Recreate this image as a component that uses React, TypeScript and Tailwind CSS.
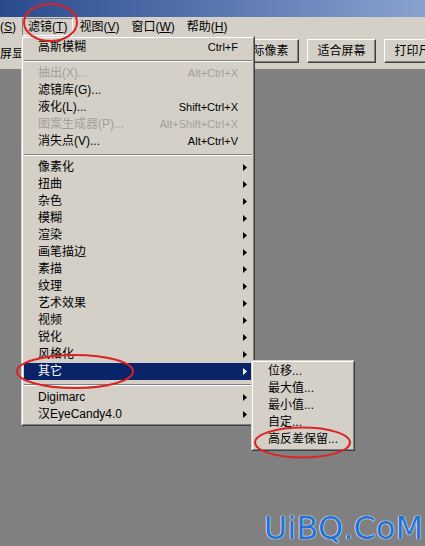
import React from 'react';

type Entry =
  | { sep: true }
  | { label: string; keys?: string; disabled?: boolean; sub?: boolean; active?: boolean };

const mainMenu: Entry[] = [
  { label: '高斯模糊', keys: 'Ctrl+F' },
  { sep: true },
  { label: '抽出(X)...', keys: 'Alt+Ctrl+X', disabled: true },
  { label: '滤镜库(G)...' },
  { label: '液化(L)...', keys: 'Shift+Ctrl+X' },
  { label: '图案生成器(P)...', keys: 'Alt+Shift+Ctrl+X', disabled: true },
  { label: '消失点(V)...', keys: 'Alt+Ctrl+V' },
  { sep: true },
  { label: '像素化', sub: true },
  { label: '扭曲', sub: true },
  { label: '杂色', sub: true },
  { label: '模糊', sub: true },
  { label: '渲染', sub: true },
  { label: '画笔描边', sub: true },
  { label: '素描', sub: true },
  { label: '纹理', sub: true },
  { label: '艺术效果', sub: true },
  { label: '视频', sub: true },
  { label: '锐化', sub: true },
  { label: '风格化', sub: true },
  { label: '其它', sub: true, active: true },
  { sep: true },
  { label: 'Digimarc', sub: true },
  { label: '汉EyeCandy4.0', sub: true },
];

const subMenu = ['位移...', '最大值...', '最小值...', '自定...', '高反差保留...'];

const Arrow = ({ white }: { white?: boolean }) => (
  <svg width="4" height="7" viewBox="0 0 4 7">
    <path d="M0 0 L4 3.5 L0 7 Z" fill={white ? '#fff' : '#000'} />
  </svg>
);

const Row = ({ label, keys, disabled, sub, active }: { label: string; keys?: string; disabled?: boolean; sub?: boolean; active?: boolean }) => (
  <div
    className={`grid grid-cols-[1fr_auto_14px] items-center h-[17px] pl-[14px] ${
      active ? 'bg-[#0a246a] text-white' : disabled ? 'text-[#a39f97]' : 'text-black'
    }`}
  >
    <span className="whitespace-nowrap leading-none pb-px">{label}</span>
    <span className="text-[11px] whitespace-nowrap leading-none">{keys}</span>
    <span className="flex justify-center">{sub && <Arrow white={active} />}</span>
  </div>
);

const Separator = () => (
  <div className="h-[9px] flex items-center">
    <div className="w-full h-[2px] border-t border-t-[#808080] border-b border-b-white" />
  </div>
);

const Frame = ({ className, children }: { className: string; children: React.ReactNode }) => (
  <div
    className={`absolute bg-[#d4d0c8] border border-t-[#d4d0c8] border-l-[#d4d0c8] border-r-[#404040] border-b-[#404040] ${className}`}
  >
    <div className="border border-t-white border-l-white border-r-[#808080] border-b-[#808080] p-px">{children}</div>
  </div>
);

const MenuTitle = ({ name, letter, pressed, className = '' }: { name: string; letter: string; pressed?: boolean; className?: string }) => (
  <div
    className={`h-[18px] px-[5px] flex items-center whitespace-nowrap border ${
      pressed ? 'border-t-[#808080] border-l-[#808080] border-r-white border-b-white' : 'border-transparent'
    } ${className}`}
  >
    {name}(<u className="underline-offset-1">{letter}</u>)
  </div>
);

const ToolButton = ({ children, className = '' }: { children: React.ReactNode; className?: string }) => (
  <div
    className={`h-[24px] w-[69px] shrink-0 flex items-center justify-center whitespace-nowrap border border-t-white border-l-white border-r-[#404040] border-b-[#404040] shadow-[inset_-1px_-1px_0_#808080] ${className}`}
  >
    {children}
  </div>
);

export default function App() {
  return (
    <div className="relative w-[425px] h-[546px] overflow-hidden flex flex-col bg-[#808080] text-[12px] text-black font-['Liberation_Sans','Noto_Sans_CJK_SC',sans-serif]">
      {/* title bar */}
      <div className="h-[17px] shrink-0 bg-gradient-to-r from-[#2a4a8e] to-[#8aa2cf]" />

      {/* menu bar */}
      <div className="h-[19px] shrink-0 bg-[#d4d0c8] flex items-center overflow-hidden">
        <MenuTitle name="选择" letter="S" className="ml-[-30px]" />
        <MenuTitle name="滤镜" letter="T" pressed />
        <MenuTitle name="视图" letter="V" />
        <MenuTitle name="窗口" letter="W" />
        <MenuTitle name="帮助" letter="H" />
      </div>

      {/* options bar */}
      <div className="h-[33px] shrink-0 bg-[#d4d0c8] flex items-start pt-[3px] overflow-hidden">
        <span className="self-center ml-[-24px] whitespace-nowrap">以满屏显示</span>
        <ToolButton className="ml-[194px]">实际像素</ToolButton>
        <ToolButton className="ml-[8px]">适合屏幕</ToolButton>
        <ToolButton className="ml-[8px]">打印尺寸</ToolButton>
      </div>

      {/* workspace */}
      <div className="flex-1 bg-[#808080]" />

      {/* filter menu */}
      <Frame className="left-[21px] top-[36px] w-[234px] z-10">
        {mainMenu.map((e, i) => ('sep' in e ? <Separator key={i} /> : <Row key={i} {...e} />))}
      </Frame>

      {/* other submenu */}
      <Frame className="left-[251px] top-[360px] w-[104px] z-20">
        {subMenu.map((s) => (
          <Row key={s} label={s} />
        ))}
      </Frame>

      {/* red annotations */}
      <svg className="absolute inset-0 z-30 pointer-events-none" width="425" height="546">
        <ellipse cx="50.5" cy="22.5" rx="26.5" ry="18.5" fill="none" stroke="#dc2222" strokeWidth="2" />
        <ellipse cx="75" cy="371.5" rx="58" ry="16.5" fill="none" stroke="#dc2222" strokeWidth="2" />
        <ellipse cx="302.5" cy="442.5" rx="47.5" ry="15" fill="none" stroke="#dc2222" strokeWidth="2" />
      </svg>

      {/* watermark */}
      <div className="absolute right-[2px] top-[512px] z-30 leading-none text-[32px] text-[#1f72d6] font-['DejaVu_Sans',sans-serif] [text-shadow:0_0_1px_#fff,0_0_1px_#fff,0_0_1px_#fff]">
        UiBQ.CoM
      </div>
    </div>
  );
}
